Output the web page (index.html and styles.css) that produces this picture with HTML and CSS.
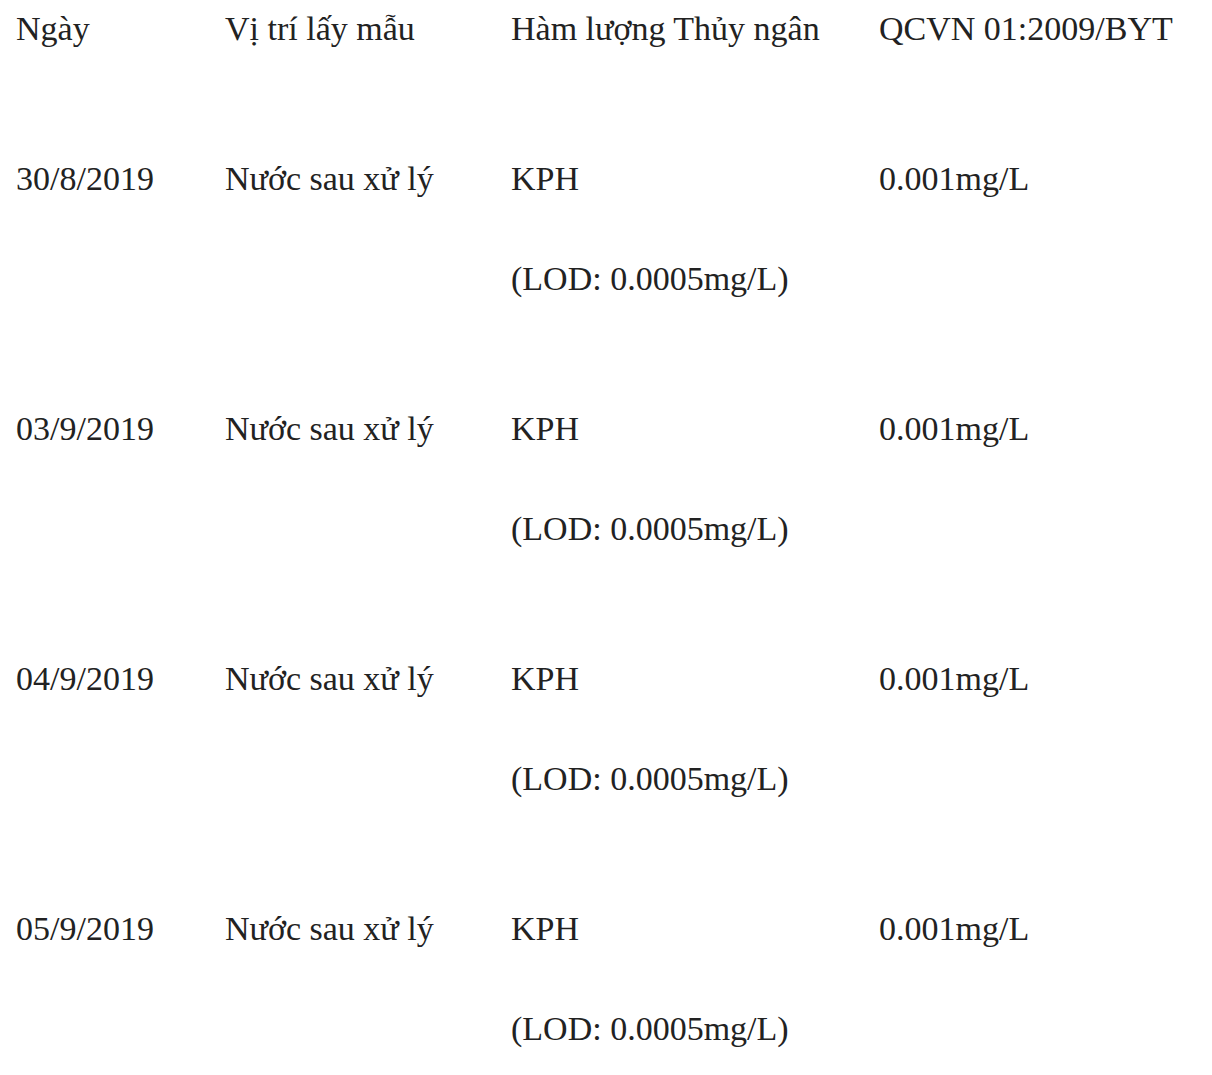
FILE: index.html
```html
<!DOCTYPE html>
<html lang="vi">
<head>
<meta charset="utf-8">
<link rel="stylesheet" href="styles.css">
</head>
<body>
<div class="table">
  <div class="row">
    <div class="cell"><p>Ngày</p></div>
    <div class="cell"><p>Vị trí lấy mẫu</p></div>
    <div class="cell"><p>Hàm lượng Thủy ngân</p></div>
    <div class="cell"><p>QCVN 01:2009/BYT</p></div>
  </div>
  <div class="row">
    <div class="cell"><p>30/8/2019</p></div>
    <div class="cell"><p>Nước sau xử lý</p></div>
    <div class="cell"><p>KPH</p><p>(LOD: 0.0005mg/L)</p></div>
    <div class="cell"><p>0.001mg/L</p></div>
  </div>
  <div class="row">
    <div class="cell"><p>03/9/2019</p></div>
    <div class="cell"><p>Nước sau xử lý</p></div>
    <div class="cell"><p>KPH</p><p>(LOD: 0.0005mg/L)</p></div>
    <div class="cell"><p>0.001mg/L</p></div>
  </div>
  <div class="row">
    <div class="cell"><p>04/9/2019</p></div>
    <div class="cell"><p>Nước sau xử lý</p></div>
    <div class="cell"><p>KPH</p><p>(LOD: 0.0005mg/L)</p></div>
    <div class="cell"><p>0.001mg/L</p></div>
  </div>
  <div class="row">
    <div class="cell"><p>05/9/2019</p></div>
    <div class="cell"><p>Nước sau xử lý</p></div>
    <div class="cell"><p>KPH</p><p>(LOD: 0.0005mg/L)</p></div>
    <div class="cell"><p>0.001mg/L</p></div>
  </div>
</div>
</body>
</html>
```
FILE: styles.css
```css
html, body {
  margin: 0;
  padding: 0;
  background: #ffffff;
}
body {
  font-family: "Liberation Serif", "Times New Roman", serif;
  font-size: 34px;
  color: #222222;
}
.table {
  display: flex;
  flex-direction: column;
  gap: 100px;
  padding: 4px 0 0 16px;
}
.row {
  display: grid;
  grid-template-columns: 209px 286px 368px 1fr;
}
.cell {
  display: flex;
  flex-direction: column;
  gap: 50px;
}
.cell p {
  margin: 0;
  line-height: 50px;
  white-space: nowrap;
}
```
